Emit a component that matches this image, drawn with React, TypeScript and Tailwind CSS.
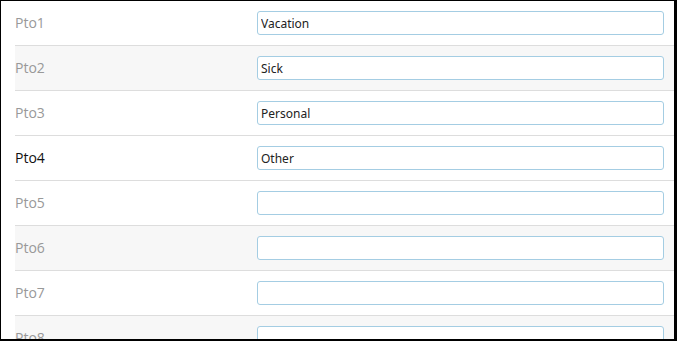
import React from "react";

const rows = [
  { label: "Pto1", value: "Vacation" },
  { label: "Pto2", value: "Sick" },
  { label: "Pto3", value: "Personal" },
  { label: "Pto4", value: "Other", active: true },
  { label: "Pto5", value: "" },
  { label: "Pto6", value: "" },
  { label: "Pto7", value: "" },
  { label: "Pto8", value: "" },
];

export default function App() {
  return (
    <div className="w-[677px] h-[341px] bg-white border-l border-t border-r-[3px] border-b-2 border-black overflow-hidden pl-[14px]">
      {rows.map((row, idx) => {
        const striped = idx % 2 === 1 && !row.active;
        return (
          <div
            key={idx}
            className={
              "flex items-center h-[45px] shrink-0 border-b border-[#dddddd] pr-[10px] " +
              (striped ? "bg-[#f7f7f7]" : "bg-white")
            }
          >
            <div
              className={
                "w-[242px] shrink-0 text-[14px] font-['Open_Sans',sans-serif] pb-[2px] " +
                (row.active ? "text-[#111111]" : "text-[#999999]")
              }
            >
              {row.label}
            </div>
            <input
              type="text"
              readOnly
              value={row.value}
              className="flex-1 h-[24px] rounded-[3px] border border-[#a4cde3] bg-white px-[3px] text-[12px] text-[#222222] font-['Noto_Sans',sans-serif] outline-none"
            />
          </div>
        );
      })}
    </div>
  );
}
